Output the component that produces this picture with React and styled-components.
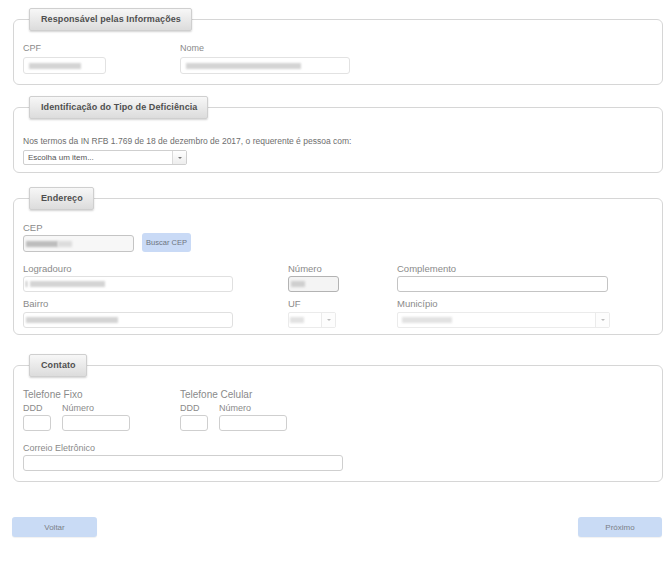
import React from 'react';
import styled, { createGlobalStyle } from 'styled-components';

const GlobalStyle = createGlobalStyle`
  html, body {
    margin: 0;
    padding: 0;
    background: #ffffff;
  }
  body {
    font-family: 'Liberation Sans', Arial, sans-serif;
    color: #777;
  }
`;

const Page = styled.div`
  width: 669px;
  height: 562px;
  box-sizing: border-box;
  padding: 8px 6px 0 13px;
`;

const Section = styled.fieldset`
  margin: 0 0 ${(p) => p.$after || 0}px;
  padding: 0 9px ${(p) => p.$bottom || 0}px;
  border: 1px solid #d6d6d6;
  border-radius: 6px;
  min-width: 0;
`;

const Legend = styled.legend`
  margin-left: 6px;
  height: 23px;
  box-sizing: border-box;
  line-height: 21px;
  padding: 0 10px 0 11px;
  border: 1px solid #cfcfcf;
  border-radius: 2px;
  background: linear-gradient(#f7f7f7, #dcdcdc);
  box-shadow: 0 1px 2px rgba(0, 0, 0, 0.18);
  font-size: 9px;
  font-weight: bold;
  color: #4f4f4f;
  letter-spacing: 0.1px;
`;

const Row = styled.div`
  display: flex;
  align-items: flex-end;
  margin-top: ${(p) => p.$top || 0}px;
`;

const Field = styled.div`
  display: flex;
  flex-direction: column;
  width: ${(p) => (p.$w ? `${p.$w}px` : 'auto')};
  flex: none;
`;

const Label = styled.span`
  display: block;
  font-size: ${(p) => p.$size || 9}px;
  line-height: 12px;
  height: 12px;
  color: #8a8a8a;
  margin-bottom: ${(p) => p.$gap ?? 1}px;
  white-space: nowrap;
`;

const Input = styled.div`
  width: ${(p) => p.$w}px;
  height: ${(p) => p.$h || 16}px;
  box-sizing: border-box;
  border: 1px solid ${(p) => p.$border || '#d9d9d9'};
  border-radius: 3px;
  background: ${(p) => p.$bg || '#fff'};
  display: flex;
  align-items: center;
  padding-left: ${(p) => p.$pad ?? 4}px;
`;

const Blur = styled.span`
  display: block;
  width: ${(p) => p.$w}px;
  height: 6px;
  margin-left: ${(p) => p.$ml || 0}px;
  background: ${(p) => p.$c || '#d4d4d4'};
  filter: blur(1px);
`;

const Select = styled.div`
  width: ${(p) => p.$w}px;
  height: ${(p) => p.$h || 16}px;
  box-sizing: border-box;
  border: 1px solid ${(p) => p.$border || '#cfcfcf'};
  border-radius: 2px;
  background: ${(p) => p.$bg || '#fff'};
  display: flex;
  align-items: stretch;
`;

const SelectValue = styled.div`
  flex: 1;
  display: flex;
  align-items: center;
  padding-left: ${(p) => p.$pad ?? 4}px;
  font-size: 8px;
  color: #555;
  overflow: hidden;
  white-space: nowrap;
`;

const SelectArrow = styled.div`
  width: 13px;
  border-left: 1px solid ${(p) => p.$line || '#dadada'};
  display: flex;
  align-items: center;
  justify-content: center;
  background: ${(p) => p.$bg || 'linear-gradient(#ffffff, #ededed)'};
  &::after {
    content: '';
    border-left: 2px solid transparent;
    border-right: 2px solid transparent;
    border-top: 2px solid ${(p) => p.$color || '#777'};
  }
`;

const Text = styled.p`
  margin: ${(p) => p.$top || 0}px 0 0;
  font-size: 8.5px;
  line-height: 12px;
  color: #6e6e6e;
  white-space: nowrap;
`;

const SmallButton = styled.div`
  width: 49px;
  height: 19px;
  margin-left: 8px;
  border-radius: 3px;
  background: #c9daf6;
  color: #6d7480;
  font-size: 7.5px;
  display: flex;
  align-items: center;
  justify-content: center;
`;

const Footer = styled.div`
  display: flex;
  justify-content: space-between;
  margin: 35px 1px 0 -1px;
`;

const NavButton = styled.div`
  width: ${(p) => p.$w}px;
  height: 20px;
  border-radius: 3px;
  background: #c9dbf5;
  box-shadow: 0 1px 1px rgba(0, 0, 0, 0.06);
  color: #7b7f86;
  font-size: 8px;
  display: flex;
  align-items: center;
  justify-content: center;
`;

export default function App() {
  return (
    <>
      <GlobalStyle />
      <Page>
        <Section $after={11} $bottom={10}>
          <Legend>Responsável pelas Informações</Legend>
          <Row $top={11}>
            <Field $w={157}>
              <Label $gap={3}>CPF</Label>
              <Input $w={83} $h={17} $border="#e2e2e2" $pad={5}>
                <Blur $w={52} />
              </Input>
            </Field>
            <Field>
              <Label $gap={3}>Nome</Label>
              <Input $w={170} $h={17} $border="#e2e2e2" $pad={5}>
                <Blur $w={115} />
              </Input>
            </Field>
          </Row>
        </Section>

        <Section $after={14} $bottom={7}>
          <Legend>Identificação do Tipo de Deficiência</Legend>
          <Text $top={16}>
            Nos termos da IN RFB 1.769 de 18 de dezembro de 2017, o requerente é pessoa com:
          </Text>
          <Row $top={3}>
            <Select $w={164} $h={15}>
              <SelectValue>Escolha um item...</SelectValue>
              <SelectArrow />
            </Select>
          </Row>
        </Section>

        <Section $after={19} $bottom={6}>
          <Legend>Endereço</Legend>
          <Row $top={12}>
            <Field>
              <Label $size={9.5}>CEP</Label>
              <Input $w={111} $h={17} $border="#c4c4c4" $bg="#f7f7f7" $pad={2}>
                <Blur $w={32} $c="#bdbdbd" />
                <Blur $w={14} $c="#dcdcdc" />
              </Input>
            </Field>
            <SmallButton>Buscar CEP</SmallButton>
          </Row>
          <Row $top={11}>
            <Field $w={265}>
              <Label $size={9.5}>Logradouro</Label>
              <Input $w={210} $border="#e0e0e0" $pad={2}>
                <Blur $w={1} $c="#999" />
                <Blur $w={75} $ml={3} />
              </Input>
            </Field>
            <Field $w={109}>
              <Label $size={9.5}>Número</Label>
              <Input $w={51} $border="#b3b3b3" $bg="#f4f4f4" $pad={2}>
                <Blur $w={14} $c="#cfcfcf" />
              </Input>
            </Field>
            <Field>
              <Label $size={9.5}>Complemento</Label>
              <Input $w={211} $border="#c4c4c4" />
            </Field>
          </Row>
          <Row $top={6}>
            <Field $w={265}>
              <Label $size={9.5} $gap={2}>Bairro</Label>
              <Input $w={210} $border="#e0e0e0" $pad={2}>
                <Blur $w={92} />
              </Input>
            </Field>
            <Field $w={109}>
              <Label $size={9.5} $gap={2}>UF</Label>
              <Select $w={48} $border="#ebebeb">
                <SelectValue $pad={1}>
                  <Blur $w={14} $c="#e2e2e2" />
                </SelectValue>
                <SelectArrow $line="#ebebeb" $bg="#fdfdfd" $color="#bbb" />
              </Select>
            </Field>
            <Field>
              <Label $size={9.5} $gap={2}>Município</Label>
              <Select $w={213} $border="#ebebeb">
                <SelectValue $pad={4}>
                  <Blur $w={50} $c="#e2e2e2" />
                </SelectValue>
                <SelectArrow $line="#ebebeb" $bg="#fdfdfd" $color="#bbb" />
              </Select>
            </Field>
          </Row>
        </Section>

        <Section $bottom={10}>
          <Legend>Contato</Legend>
          <Row $top={12}>
            <Field $w={157}>
              <Label $size={10} $gap={1}>Telefone Fixo</Label>
              <Row>
                <Field $w={39}>
                  <Label $gap={1}>DDD</Label>
                  <Input $w={28} $border="#cfcfcf" />
                </Field>
                <Field>
                  <Label $gap={1}>Número</Label>
                  <Input $w={68} $border="#cfcfcf" />
                </Field>
              </Row>
            </Field>
            <Field>
              <Label $size={10} $gap={1}>Telefone Celular</Label>
              <Row>
                <Field $w={39}>
                  <Label $gap={1}>DDD</Label>
                  <Input $w={28} $border="#cfcfcf" />
                </Field>
                <Field>
                  <Label $gap={1}>Número</Label>
                  <Input $w={68} $border="#cfcfcf" />
                </Field>
              </Row>
            </Field>
          </Row>
          <Row $top={11}>
            <Field>
              <Label>Correio Eletrônico</Label>
              <Input $w={320} $border="#cfcfcf" />
            </Field>
          </Row>
        </Section>

        <Footer>
          <NavButton $w={85}>Voltar</NavButton>
          <NavButton $w={84}>Próximo</NavButton>
        </Footer>
      </Page>
    </>
  );
}
